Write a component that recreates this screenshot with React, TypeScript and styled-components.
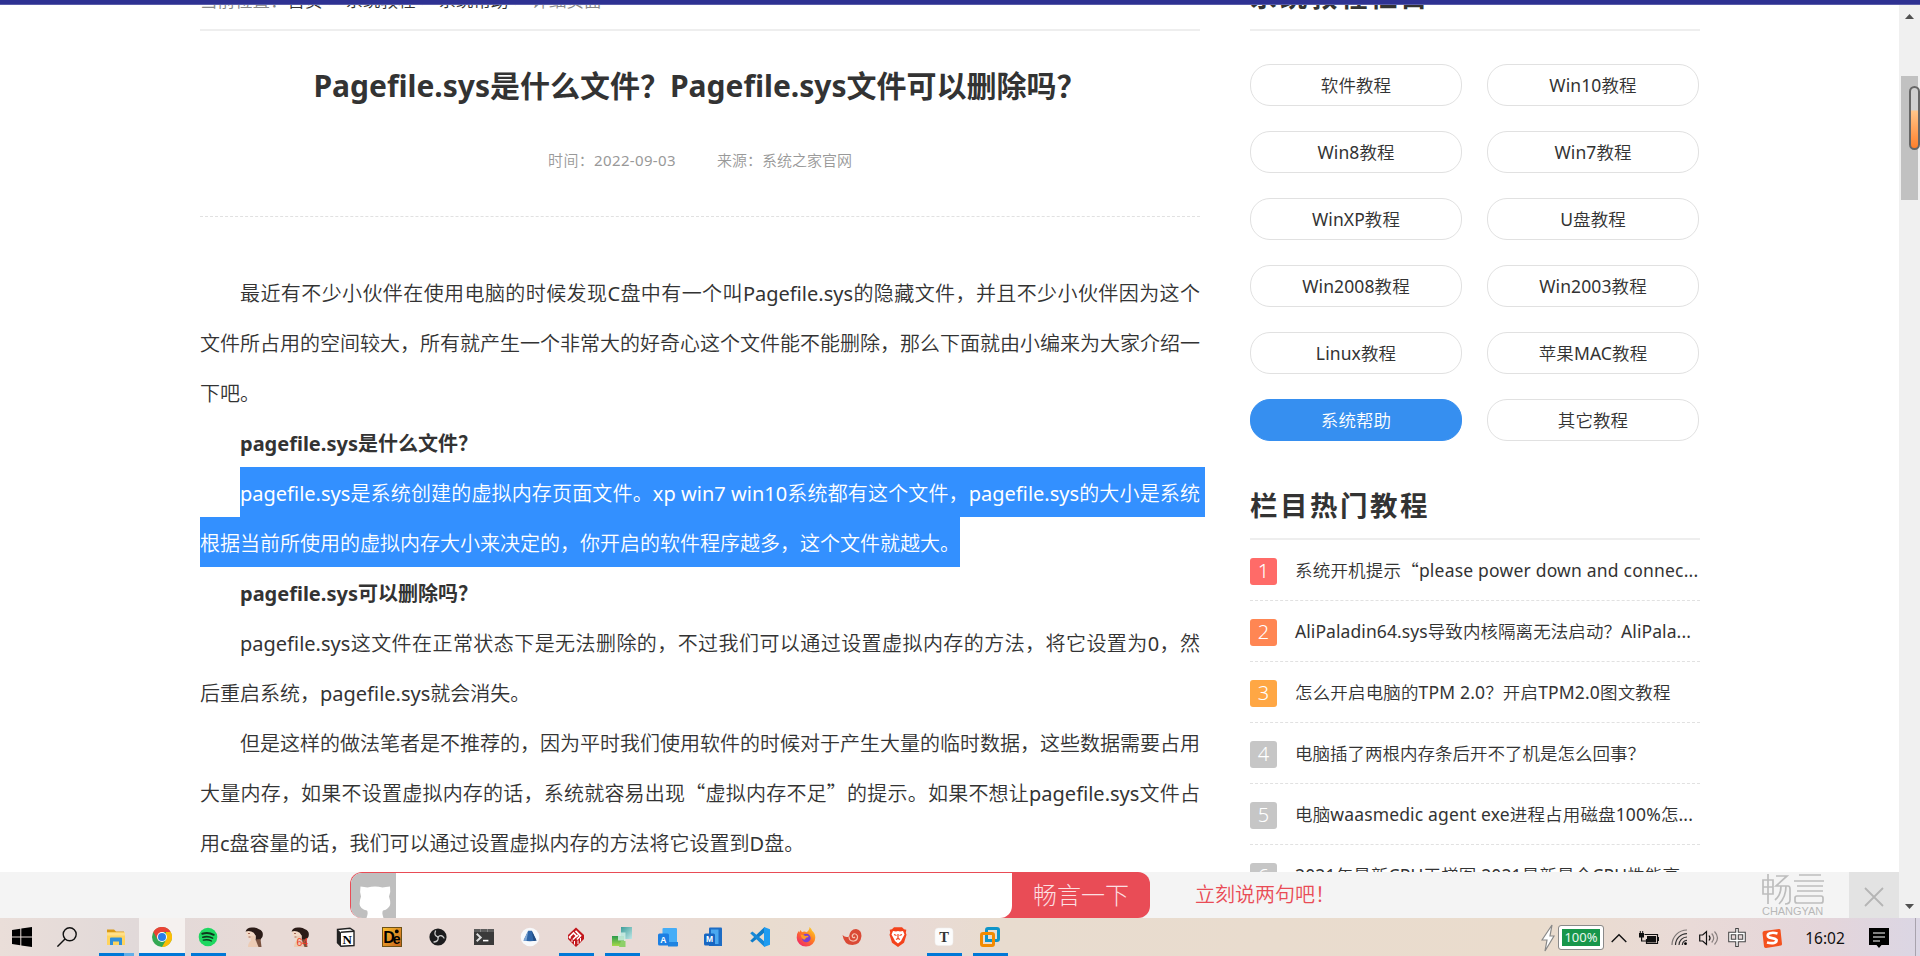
import React from "react";
import styled, { createGlobalStyle } from "styled-components";

const regular = `"Noto Sans", "Noto Sans CJK SC DemiLight", "Noto Sans CJK SC", sans-serif`;
const strong = `"Noto Sans", "Noto Sans CJK SC", sans-serif`;

const Global = createGlobalStyle`
  * { box-sizing: border-box; }
  body { margin: 0; background: #fff; overflow: hidden; }
`;

const Screen = styled.div`
  width: 1920px;
  height: 956px;
  display: flex;
  flex-direction: column;
  overflow: hidden;
  font-family: ${regular};
  color: #333;
  background: #fff;
`;
const TopEdge = styled.div`
  height: 5px;
  flex: none;
  background: #2e3192;
  border-bottom: 1px solid #5a5ca9;
`;
const Browser = styled.div`
  flex: 1;
  display: flex;
  min-height: 0;
`;
const Viewport = styled.div`
  width: 1899px;
  display: flex;
  flex-direction: column;
`;
const Content = styled.div`
  flex: 1;
  min-height: 0;
  overflow: hidden;
  display: flex;
  align-items: flex-start;
  gap: 50px;
  padding-left: 200px;
`;

/* ---------- article ---------- */
const Article = styled.article`
  width: 1000px;
  flex: none;
  margin-top: -16px;
`;
const Crumbs = styled.div`
  height: 42px;
  line-height: 23px;
  border-bottom: 2px solid #eee;
  font-size: 17.5px;
  color: #888;
  white-space: pre;
`;
const CrumbLink = styled.a`
  color: #333;
`;
const Arrow = styled.span`
  display: inline-block;
  width: 23px;
  padding-left: 6px;
  font-size: 14px;
`;
const Title = styled.h1`
  margin: 30px 0 0;
  font-family: ${strong};
  font-size: 30px;
  line-height: 50px;
  font-weight: 700;
  text-align: center;
`;
const Meta = styled.div`
  display: flex;
  justify-content: center;
  gap: 41px;
  height: 106px;
  padding-top: 39px;
  border-bottom: 1px dashed #e1e1e1;
  font-size: 15px;
  line-height: 21px;
  color: #999;
`;
const MetaDate = styled.span`
  letter-spacing: 0.35px;
`;
const Body = styled.div`
  padding-top: 50px;
`;
const Line = styled.div<{
  $indent?: boolean;
  $fill?: boolean;
  $bold?: boolean;
  $selected?: number;
}>`
  height: 50px;
  line-height: 53px;
  font-size: 20px;
  white-space: nowrap;
  margin-left: ${(p) => (p.$indent ? 40 : 0)}px;
  ${(p) => (p.$bold ? `font-weight: 700; font-family: ${strong};` : "")}
  text-align-last: ${(p) => (p.$fill ? "justify" : "left")};
  ${(p) =>
    p.$selected
      ? `background:#3390ff;color:#fff;width:${p.$selected}px;padding-right:${p.$fill ? 5 : 0}px;`
      : ""}
`;
const Cn = styled.span`
  font-family: "Noto Sans CJK SC DemiLight", "Noto Sans CJK SC", sans-serif;
  line-height: 1;
`;

/* ---------- sidebar ---------- */
const Sidebar = styled.aside`
  width: 450px;
  flex: none;
  margin-top: -42px;
`;
const Heading = styled.h2`
  margin: 0;
  height: 68px;
  line-height: 67px;
  border-bottom: 2px solid #eee;
  font-family: ${strong};
  font-size: 27.5px;
  letter-spacing: 2.5px;
  font-weight: 700;
`;
const Pills = styled.div`
  display: grid;
  grid-template-columns: 212px 212px;
  gap: 25px;
  padding: 33px 0 31px;
`;
const Pill = styled.a<{ $active?: boolean }>`
  height: 42px;
  line-height: 40px;
  border: 1px solid ${(p) => (p.$active ? "#368ff0" : "#e1e1e1")};
  border-radius: 20px;
  background: ${(p) => (p.$active ? "#368ff0" : "#fff")};
  color: ${(p) => (p.$active ? "#fff" : "#333")};
  font-size: 17.5px;
  letter-spacing: 0.1px;
  text-align: center;
`;
const RankRow = styled.div`
  height: 61px;
  border-bottom: 1px dashed #e1e1e1;
  display: flex;
  align-items: flex-start;
  gap: 18px;
  padding-top: 18px;
  font-size: 17.5px;
  line-height: 27px;
  white-space: nowrap;
`;
const Badge = styled.span<{ $color: string }>`
  width: 27px;
  height: 27px;
  border-radius: 3px;
  background: ${(p) => p.$color};
  color: #fff;
  font-size: 20px;
  font-weight: 300;
  line-height: 26px;
  text-align: center;
`;
const RankText = styled.span<{ $track?: number }>`
  margin-top: -1px;
  letter-spacing: ${(p) => p.$track || 0}px;
`;

/* ---------- comment bar ---------- */
const CommentBar = styled.div`
  height: 46px;
  flex: none;
  display: flex;
  background: #f4f4f4;
  padding-left: 350px;
  overflow: hidden;
`;
const CommentBox = styled.div`
  width: 800px;
  height: 46px;
  display: flex;
  background: #e94c56;
  border-radius: 12px;
  overflow: hidden;
  padding: 1px 0 0 1px;
`;
const Field = styled.div`
  width: 661px;
  height: 45px;
  border-radius: 11px 0 12px 11px;
  background: #fff;
  overflow: hidden;
`;
const SendLabel = styled.div`
  flex: 1;
  text-align: center;
  font-family: ${strong};
  font-size: 24px;
  font-weight: 300;
  line-height: 44px;
  color: #fcdfe1;
`;
const Prompt = styled.div`
  width: 612px;
  padding-left: 45px;
  font-size: 20px;
  line-height: 46px;
  color: #e94c56;
`;
const Brand = styled.div`
  width: 87px;
  color: #b8b8b8;
`;
const BrandMark = styled.svg`
  display: block;
  margin-top: 2px;
`;
const BrandName = styled.div`
  font-family: "Liberation Sans", sans-serif;
  font-size: 11px;
  line-height: 12px;
  letter-spacing: -0.05px;
`;
const Close = styled.div`
  width: 50px;
  height: 46px;
  background: #e3e3e3;
  display: flex;
  align-items: center;
  justify-content: center;
  padding-top: 3px;
`;

/* ---------- scrollbar ---------- */
const Track = styled.div`
  width: 21px;
  background: #f0f0f0;
  display: flex;
  flex-direction: column;
  align-items: center;
  justify-content: space-between;
  padding: 8px 1px;
`;
const Thumb = styled.div`
  position: relative;
  width: 17px;
  height: 124px;
  background: #c1c1c1;
  margin: 57px 0 auto;
`;
const Gauge = styled.div`
  position: absolute;
  left: 8px;
  top: 10px;
  width: 11px;
  height: 64px;
  border: 2px solid #666;
  border-radius: 6px;
  background: linear-gradient(#d0d0d0 0 37%, #ffc68a 38%, #ff7f2a 100%);
`;

/* ---------- taskbar ---------- */
const Taskbar = styled.div`
  height: 38px;
  flex: none;
  display: flex;
  background: linear-gradient(
    90deg,
    #eaded9 0,
    #e1d9d9 7%,
    #e8dad6 14%,
    #e9dad6 33%,
    #e9dccf 40%,
    #e9dad6 47%,
    #e8dccf 52%,
    #eadccd 80%,
    #e9dad7 88%,
    #e4d5da 95%,
    #dbd6e4 100%
  );
`;
const Cell = styled.div<{ $w?: number; $after?: number; $active?: boolean }>`
  width: ${(p) => p.$w || 46}px;
  margin-right: ${(p) => p.$after || 0}px;
  height: 38px;
  display: flex;
  flex-direction: column;
  align-items: center;
  padding-top: 9px;
  background: ${(p) => (p.$active ? "#f5f1ef" : "transparent")};
`;
const Running = styled.div<{ $wide?: boolean; $split?: boolean }>`
  width: ${(p) => (p.$wide ? 46 : 35)}px;
  height: 3px;
  margin-top: auto;
  background: ${(p) =>
    p.$split ? "linear-gradient(90deg,#0078d7 25px,#62aee8 25px)" : "#0078d7"};
`;
const Tray = styled.div`
  margin-left: auto;
  width: 384px;
  display: flex;
  align-items: center;
  padding-top: 1px;
`;
const TrayItem = styled.div<{ $w: number }>`
  width: ${(p) => p.$w}px;
  height: 34px;
  display: flex;
  align-items: center;
  justify-content: center;
`;
const Charge = styled.div`
  width: 44px;
  height: 23px;
  outline: 1px solid #8a8a8a;
  border-radius: 2px;
  padding: 3px;
  background: #fff;
`;
const ChargeFill = styled.div`
  height: 17px;
  background: #17964b;
  color: #e9f6ee;
  font-size: 13px;
  line-height: 17px;
  text-align: center;
`;
const Clock = styled.div`
  width: 64px;
  text-align: center;
  color: #111;
  font-size: 15.5px;
`;
const DesktopEdge = styled.div`
  width: 1px;
  height: 38px;
  margin: -1px 4px 0 auto;
  background: #a8a3ad;
`;

const Ico = ({ children, box = "0 0 20 20", size = 20, w }: {
  children: React.ReactNode;
  box?: string;
  size?: number;
  w?: number;
}) => (
  <svg width={w || size} height={size} viewBox={box}>
    {children}
  </svg>
);

const portrait = (
  <>
    <path d="M2 5Q3 1 8 1l4 6-2 6H6L3 9z" fill="#f3d9c6" />
    <path d="M1.500 4.500Q3 .5 8 .6q4-.8 7 1.600 4 1.500 3.800 5 .3 3-1.800 4.500l-1.500 2.500-4-1 .2-4.500-2-3Q6 3 1.500 4.500z" fill="#2b1b17" />
    <path d="M6.500 9l5-.5v5l5 6.500H4q0-4 3-6.500z" fill="#eccbb4" />
    <path d="M11.500 12.500l5-.5 1 8h-3z" fill="#7b5340" />
    <path d="M4 6.500h2M4.500 10h2" stroke="#8d4b3c" strokeWidth=".8" />
  </>
);

const icons: Record<string, React.ReactNode> = {
  windows: (
    <path d="M0 3l8.300-1.200v7.700H0zM9.300 1.600L20 0v9.500H9.300zM0 10.500h8.300v7.700L0 17zM9.300 10.500H20V20L9.300 18.400z" fill="#000" />
  ),
  search: (
    <g fill="none" stroke="#111" strokeWidth="1.400">
      <circle cx="12.700" cy="7.300" r="6.500" />
      <path d="M8 12L0.400 19.600" />
    </g>
  ),
  explorer: (
    <>
      <path d="M1 2.500h7l2 2h8V9H1z" fill="#d99a17" />
      <path d="M1 5.500h18V18H1z" fill="#ffd45e" />
      <path d="M1 5.500h18v3H1z" fill="#ffe08a" />
      <path d="M4 18v-6.500q0-1 1-1h10q1 0 1 1V18h-3v-3.500H7V18z" fill="#2e8fdb" />
    </>
  ),
  chrome: (
    <>
      <circle cx="10" cy="10" r="10" fill="#34a853" />
      <path d="M1.300 5A10 10 0 0 1 18.700 5H10L5.700 12.500z" fill="#ea4335" />
      <path d="M18.700 5A10 10 0 0 1 10 20l4.300-7.500L14 5z" fill="#fbbc05" />
      <circle cx="10" cy="10" r="5" fill="#fff" />
      <circle cx="10" cy="10" r="4" fill="#2a7de9" />
    </>
  ),
  spotify: (
    <>
      <circle cx="10" cy="10" r="9.300" fill="#1ed760" />
      <g fill="none" stroke="#10361d" strokeLinecap="round">
        <path d="M4.300 6.800q6-1.800 11.400 1" strokeWidth="2" />
        <path d="M4.800 10.200q5.200-1.500 9.800.9" strokeWidth="1.600" />
        <path d="M5.300 13.200q4.500-1.200 8.200.8" strokeWidth="1.300" />
      </g>
    </>
  ),
  portrait,
  portrait64: (
    <>
      {portrait}
      <text x="6.500" y="19.300" fontSize="10.500" fill="#ef3b24" fontFamily="Liberation Sans, sans-serif">64</text>
    </>
  ),
  notion: (
    <>
      <path d="M1.500 2.500L14 1.200l4 2.600V18.500L5 19.300l-3.500-3.500z" fill="#fff" stroke="#222" strokeWidth="1.400" />
      <path d="M1.500 2.500l3.500 3v13.800l-3.500-3.500z" fill="#222" />
      <path d="M5 5.200l13-1" stroke="#222" strokeWidth="1.400" />
      <text x="6.400" y="17" fontSize="13" fontWeight="700" fontFamily="Liberation Serif, serif">N</text>
    </>
  ),
  de: (
    <>
      <defs>
        <linearGradient id="de" x1="0" y1="0" x2="1" y2="1">
          <stop offset="0" stopColor="#fbc02f" />
          <stop offset="1" stopColor="#c5601b" />
        </linearGradient>
      </defs>
      <rect x=".5" y=".5" width="19" height="19" fill="url(#de)" stroke="#6e5117" />
      <text x="1.200" y="16" fontSize="16" fontWeight="700" fontFamily="Liberation Sans, sans-serif">D</text>
      <text x="10.800" y="17" fontSize="14" fontWeight="700" fontFamily="Liberation Sans, sans-serif">e</text>
      <circle cx="14.800" cy="4.400" r="1.900" />
    </>
  ),
  obs: (
    <>
      <circle cx="10" cy="10" r="8.600" fill="#1c1c1e" />
      <g fill="none" stroke="#c9c9c9" strokeWidth="1.300" strokeLinecap="round">
        <path d="M10 10Q5.500 8.500 7.500 4" />
        <path d="M10 10Q13.600 7 16 11" />
        <path d="M10 10q1 4.500-4 5" />
      </g>
    </>
  ),
  terminal: (
    <>
      <path d="M0 2h20v16H0z" fill="#3a3a3a" />
      <path d="M0 2h20v3H0z" fill="#5b5b5b" />
      <path d="M6 2h.7v3H6zM13 2h.7v3H13z" fill="#999" />
      <path d="M2.700 6.800l4 3.600-4 3.800" fill="none" stroke="#ddd" strokeWidth="2" />
      <path d="M9 13.600h5.400" stroke="#fff" strokeWidth="1.600" />
    </>
  ),
  prism: (
    <>
      <circle cx="10" cy="10" r="9.300" fill="#f8f9fb" />
      <path d="M8.200 3.800h3.600l4.700 9.700q-6.500 1.600-13 0z" fill="#2f66a8" />
      <path d="M8.200 3.800l-4.700 9.700 3 .6z" fill="#7ea6d4" />
      <path d="M11.800 3.800l4.700 9.700-3 .6z" fill="#214b80" />
    </>
  ),
  diamond: (
    <>
      <path d="M10 .5L18 8v4l-8 8-8-8V8z" fill="#c2161c" />
      <g stroke="#fff" strokeWidth="1.700" fill="none">
        <path d="M4.500 11.500l-1-1.500 4-4 3 3-3.500 3.500" />
        <path d="M9.500 3.800l5 5-3.500 3.700M12 8l-2 2" />
      </g>
      <path d="M6 12.500v2.500M8.500 14v3.500M12 13.500V17M14.500 11v3.500" stroke="#fff" strokeWidth="1" />
    </>
  ),
  servers: (
    <>
      <defs>
        <linearGradient id="teal" x1="0" y1="0" x2="1" y2="1">
          <stop offset="0" stopColor="#3b9d99" />
          <stop offset="1" stopColor="#bfe6e6" />
        </linearGradient>
        <linearGradient id="leaf" x1="0" y1="0" x2="0" y2="1">
          <stop offset="0" stopColor="#2a9a4c" />
          <stop offset="1" stopColor="#a6d84b" />
        </linearGradient>
      </defs>
      <path d="M9 0h11v12H9z" fill="url(#teal)" />
      <path d="M0 9h12v10H0z" fill="url(#leaf)" />
      <path d="M6 5.500h7.500v8H6z" fill="#cfeee4" opacity=".85" />
      <path d="M9 14h4.500v6H7z" fill="#8ed06a" />
    </>
  ),
  access: (
    <>
      <path d="M4.500 2q0-1 1-1h12.500q1 0 1 1v13H4.500z" fill="#45adf7" />
      <path d="M10 15h10v3.500q0 1-1 1h-9z" fill="#1f83e0" />
      <rect x="0" y="6.500" width="11" height="12" rx="1.500" fill="#1c7fe3" />
      <text x="2.300" y="15.600" fontSize="8.500" fontWeight="700" fill="#fff" fontFamily="Liberation Sans, sans-serif">A</text>
    </>
  ),
  manager: (
    <>
      <path d="M5 1.500q0-1 1-1h11q1 0 1 1V19H5z" fill="#1d6cc4" />
      <path d="M7 2.500h7.500V17H7z" fill="#4aa8f0" />
      <rect x="0" y="6.500" width="11" height="12" rx="1.500" fill="#1766c2" />
      <text x="2" y="15.400" fontSize="8.500" fontWeight="700" fill="#fff" fontFamily="Liberation Sans, sans-serif">M</text>
    </>
  ),
  vscode: (
    <>
      <path d="M14.500 0v5.500L2.400 15.600.2 13.800z" fill="#0f7cc8" />
      <path d="M14.500 20v-5.500L2.400 4.400.2 6.200z" fill="#1689d8" />
      <path d="M14 0L20 2.300v15.400L14 20z" fill="#1f9cf0" />
    </>
  ),
  firefox: (
    <>
      <defs>
        <linearGradient id="fox" x1="1" y1="0" x2=".2" y2="1">
          <stop offset="0" stopColor="#ffe226" />
          <stop offset=".5" stopColor="#ff7b22" />
          <stop offset="1" stopColor="#f0246b" />
        </linearGradient>
      </defs>
      <path d="M13.500 0q2 1.500 2.600 3.800 3.400 3 3.200 7a9.300 8.800 0 0 1-18.600 0Q.6 6.500 2.600 4l.6 1.500L4.500 3l1.500 2.200q2.500-1.400 4.500 0Q13.500 3.500 13.500 0z" fill="url(#fox)" />
      <circle cx="10.300" cy="11" r="4.300" fill="#7b3fd0" />
      <path d="M4.500 7.500q3 0 5 1.500 3-.6 3 1-3 .4-3.600 2.500-3 .6-4.400-5z" fill="#ff9a24" />
    </>
  ),
  shell: (
    <>
      <path d="M.5 8q3 3 6.500 1.500Q8 2 14 2q5.600 1 5.500 7-.8 8.500-9 9Q2 18 .5 8z" fill="#da4a36" />
      <path d="M7 9.500q0 5 5 4.500 4-1 3.500-5-1.400-3-4-2-2 1.400-.8 3.200 1.200 1 2.300-.2" fill="none" stroke="#f7c3b0" strokeWidth="1.200" />
    </>
  ),
  brave: (
    <>
      <path d="M6 .3h8l2 2 2.300.5-.5 3 .7 2-2.500 8L10 20l-6-4.200-2.500-8 .7-2-.5-3L4 2.300z" fill="#f4421c" />
      <path d="M5 4l3 .5L10 4l2 .5 3-.5 1.500 3.500L14 12l-1 2-3 2.500L7 14l-1-2-2.500-4.500z" fill="#fff" />
      <path d="M6 7.500l2.500 1M14 7.500l-2.500 1M10 7v4M8 12.500l2-1 2 1" stroke="#f4421c" strokeWidth="1.200" fill="none" />
    </>
  ),
  typora: (
    <>
      <rect x="1" y="1" width="18" height="17.500" rx="3.500" fill="#fcfcfc" stroke="#eee" strokeWidth=".5" />
      <text x="5.300" y="14.500" fontSize="14.500" fontWeight="700" fill="#333" fontFamily="Liberation Serif, serif">T</text>
    </>
  ),
  vmware: (
    <g fill="none" strokeWidth="3">
      <rect x="6.500" y="1.500" width="12" height="12" rx="1.500" stroke="#0f95c9" />
      <rect x="1.500" y="6.500" width="12" height="12" rx="1.500" stroke="#f38b00" />
      <path d="M6.500 9v4.500H11" stroke="#0f95c9" />
    </g>
  ),
};

const apps: { icon: string; run?: boolean; w?: number; after?: number; active?: boolean; split?: boolean }[] = [
  { icon: "windows", w: 44 },
  { icon: "search", after: 3 },
  { icon: "explorer", run: true, split: true },
  { icon: "chrome", run: true, active: true },
  { icon: "spotify", run: true },
  { icon: "portrait" },
  { icon: "portrait64" },
  { icon: "notion" },
  { icon: "de" },
  { icon: "obs" },
  { icon: "terminal" },
  { icon: "prism" },
  { icon: "diamond", run: true },
  { icon: "servers", run: true },
  { icon: "access" },
  { icon: "manager" },
  { icon: "vscode" },
  { icon: "firefox" },
  { icon: "shell" },
  { icon: "brave" },
  { icon: "typora", run: true },
  { icon: "vmware", run: true },
];

const pills = [
  "软件教程", "Win10教程", "Win8教程", "Win7教程", "WinXP教程", "U盘教程",
  "Win2008教程", "Win2003教程", "Linux教程", "苹果MAC教程", "系统帮助", "其它教程",
];

const ranks: { color: string; text: React.ReactNode; track?: number }[] = [
  { color: "#ff6b68", track: 0.2, text: <>系统开机提示<Cn>“</Cn>please power down and connec...</> },
  { color: "#ff8653", track: 0.08, text: "AliPaladin64.sys导致内核隔离无法启动？AliPala..." },
  { color: "#ffa744", track: 0.16, text: "怎么开启电脑的TPM 2.0？开启TPM2.0图文教程" },
  { color: "#c6c6c6", text: "电脑插了两根内存条后开不了机是怎么回事？" },
  { color: "#c6c6c6", track: 0.15, text: "电脑waasmedic agent exe进程占用磁盘100%怎..." },
  { color: "#c6c6c6", track: 0.15, text: "2021年最新CPU天梯图 2021最新最全CPU性能高..." },
];

export default function App() {
  return (
    <Screen lang="zh-CN">
      <Global />
      <TopEdge />
      <Browser>
        <Viewport>
          <Content>
            <Article>
              <Crumbs>
                当前位置：<CrumbLink>首页</CrumbLink><Arrow>&gt;</Arrow>
                <CrumbLink>系统教程</CrumbLink><Arrow>&gt;</Arrow>
                <CrumbLink>系统帮助</CrumbLink><Arrow>&gt;</Arrow>详细页面
              </Crumbs>
              <Title>Pagefile.sys是什么文件？Pagefile.sys文件可以删除吗？</Title>
              <Meta>
                <MetaDate>时间：2022-09-03</MetaDate>
                <span>来源：系统之家官网</span>
              </Meta>
              <Body>
                <Line $indent $fill>最近有不少小伙伴在使用电脑的时候发现C盘中有一个叫Pagefile.sys的隐藏文件，并且不少小伙伴因为这个</Line>
                <Line $fill>文件所占用的空间较大，所有就产生一个非常大的好奇心这个文件能不能删除，那么下面就由小编来为大家介绍一</Line>
                <Line>下吧。</Line>
                <Line $indent $bold>pagefile.sys是什么文件？</Line>
                <Line $indent $fill $selected={965}>pagefile.sys是系统创建的虚拟内存页面文件。xp win7 win10系统都有这个文件，pagefile.sys的大小是系统</Line>
                <Line $selected={760}>根据当前所使用的虚拟内存大小来决定的，你开启的软件程序越多，这个文件就越大。</Line>
                <Line $indent $bold>pagefile.sys可以删除吗？</Line>
                <Line $indent $fill>pagefile.sys这文件在正常状态下是无法删除的，不过我们可以通过设置虚拟内存的方法，将它设置为0，然</Line>
                <Line>后重启系统，pagefile.sys就会消失。</Line>
                <Line $indent $fill>但是这样的做法笔者是不推荐的，因为平时我们使用软件的时候对于产生大量的临时数据，这些数据需要占用</Line>
                <Line $fill>大量内存，如果不设置虚拟内存的话，系统就容易出现<Cn>“</Cn>虚拟内存不足<Cn>”</Cn>的提示。如果不想让pagefile.sys文件占</Line>
                <Line>用c盘容量的话，我们可以通过设置虚拟内存的方法将它设置到D盘。</Line>
              </Body>
            </Article>
            <Sidebar>
              <Heading>系统教程栏目</Heading>
              <Pills>
                {pills.map((p) => (
                  <Pill key={p} $active={p === "系统帮助"}>{p}</Pill>
                ))}
              </Pills>
              <Heading>栏目热门教程</Heading>
              {ranks.map((r, i) => (
                <RankRow key={i}>
                  <Badge $color={r.color}>{i + 1}</Badge>
                  <RankText $track={r.track}>{r.text}</RankText>
                </RankRow>
              ))}
            </Sidebar>
          </Content>
          <CommentBar>
            <CommentBox>
              <Field>
                <svg width="45" height="45" viewBox="0 0 45 45">
                  <path d="M0 0h45v45H0z" fill="#bfbfbf" />
                  <path d="M9.500 13.500q4 .5 7 1 7.500-2 15 0 3-.5 7.500-1 1 5-1 10 3 9-1 11.500-2 2-5 2.500-1.500 2 .5 7.500H15.500q2-5.500.5-7.500-3-.5-5.500-2.500-3.500-3-.5-11.500-1.500-5-.5-10z" fill="#fff" />
                </svg>
              </Field>
              <SendLabel>畅言一下</SendLabel>
            </CommentBox>
            <Prompt>立刻说两句吧！</Prompt>
            <Brand>
              <BrandMark width="63" height="31" viewBox="0 0 63 31">
                <g fill="none" stroke="#bdbdbd" strokeWidth="1.700">
                  <path d="M6 0v30M1 6h10v14H1zM1 13h10" />
                  <path d="M14 2h11L14 12h12q2 0 2 3v11q0 4-5 4M19 12q0 9-6 14M24 12q0 11-7 18" />
                  <path d="M37 1h22M32 7h30M35 12h26M35 17h26M35 22h24q2 0 2 2v3q0 2-2 2H35q-2 0-2-2v-3q0-2 2-2z" />
                </g>
              </BrandMark>
              <BrandName>CHANGYAN</BrandName>
            </Brand>
            <Close>
              <svg width="20" height="20" viewBox="0 0 20 20">
                <path d="M1 1l18 18M19 1L1 19" stroke="#b5b5b5" strokeWidth="1.800" />
              </svg>
            </Close>
          </CommentBar>
        </Viewport>
        <Track>
          <svg width="9" height="6" viewBox="0 0 9 6"><path d="M0 6L4.500 1 9 6z" fill="#505050" /></svg>
          <Thumb><Gauge /></Thumb>
          <svg width="9" height="6" viewBox="0 0 9 6"><path d="M0 0l4.500 5L9 0z" fill="#505050" /></svg>
        </Track>
      </Browser>
      <Taskbar>
        {apps.map((a) => (
          <Cell key={a.icon} $w={a.w} $after={a.after} $active={a.active}>
            <Ico>{icons[a.icon]}</Ico>
            {a.run && <Running $wide={a.active} $split={a.split} />}
          </Cell>
        ))}
        <Tray>
          <TrayItem $w={23}>
            <Ico w={14} size={28} box="0 0 14 28">
              <path d="M11 1L1 16h5l-2 11 9-15H9z" fill="#fff" stroke="#888" strokeWidth="1.200" />
            </Ico>
          </TrayItem>
          <Charge><ChargeFill>100%</ChargeFill></Charge>
          <TrayItem $w={31}>
            <Ico w={16} size={10} box="0 0 16 10"><path d="M.7 9L8 1.700 15.300 9" fill="none" stroke="#111" strokeWidth="1.400" /></Ico>
          </TrayItem>
          <TrayItem $w={30}>
            <Ico w={20} size={14} box="0 0 20 14">
              <path d="M5.500 3.500h13v9h-11V8" fill="none" stroke="#111" strokeWidth="1.200" />
              <path d="M8 5h9v6.500H8zM18.500 6H20v4h-1.500zM0 2h5v4.500H0zM.8 0h1v2h-1zM3.200 0h1v2h-1zM2 6h1.200v3.500h4v1H2z" fill="#111" />
            </Ico>
          </TrayItem>
          <TrayItem $w={31}>
            <Ico w={17} size={17} box="0 0 17 17">
              <g fill="none" stroke="#333" strokeWidth="1.200">
                <path d="M1 16A15 15 0 0 1 16 1" opacity=".6" />
                <path d="M4.500 16A11.500 11.500 0 0 1 16 4.600M8 16a8 8 0 0 1 8-8M11.300 16a5 5 0 0 1 4.700-4.600" />
              </g>
              <circle cx="14.500" cy="14.700" r="1.400" />
            </Ico>
          </TrayItem>
          <TrayItem $w={28}>
            <Ico w={20} size={16} box="0 0 20 16">
              <g fill="none" stroke="#111" strokeWidth="1.200">
                <path d="M.7 5h3L7.500 1.500v13L3.700 11h-3z" />
                <path d="M10 5.500q2 2.500 0 5" />
                <path d="M12.700 3.500q4 4.500 0 9M15.500 1.500q6 6.500 0 13" opacity=".45" />
              </g>
            </Ico>
          </TrayItem>
          <TrayItem $w={28}>
            <Ico w={18} size={19} box="0 0 18 19">
              <path d="M9 0v19M2 5.500h14v7H2z" fill="none" stroke="#444" strokeWidth="3.600" />
              <path d="M9 1v17M2 5.500h14v7H2z" fill="none" stroke="#fff" strokeWidth="1.500" />
            </Ico>
          </TrayItem>
          <TrayItem $w={42}>
            <Ico>
              <path d="M2 3L17 1q1.500 0 1.500 1L20 16q0 1-1 1.500L4 20q-1.500 0-2-1.500L.5 5Q.5 3.500 2 3z" fill="#f4511e" />
              <path d="M15.500 5.500Q11 4.200 8 5.200T6 8.500q.8 1.300 4 1.600t4.500 1.700q.5 2.200-2.500 3.200-3 .6-7-.5" fill="none" stroke="#fff" strokeWidth="2.700" />
            </Ico>
          </TrayItem>
          <Clock>16:02</Clock>
          <TrayItem $w={44}>
            <Ico>
              <path d="M0 0h20v17h-7.500L10 20l-2.500-3H0z" fill="#000" />
              <path d="M4 5h12M4 9h12M4 13h7" stroke="#fff" strokeWidth="1.200" />
            </Ico>
          </TrayItem>
          <DesktopEdge />
        </Tray>
      </Taskbar>
    </Screen>
  );
}
